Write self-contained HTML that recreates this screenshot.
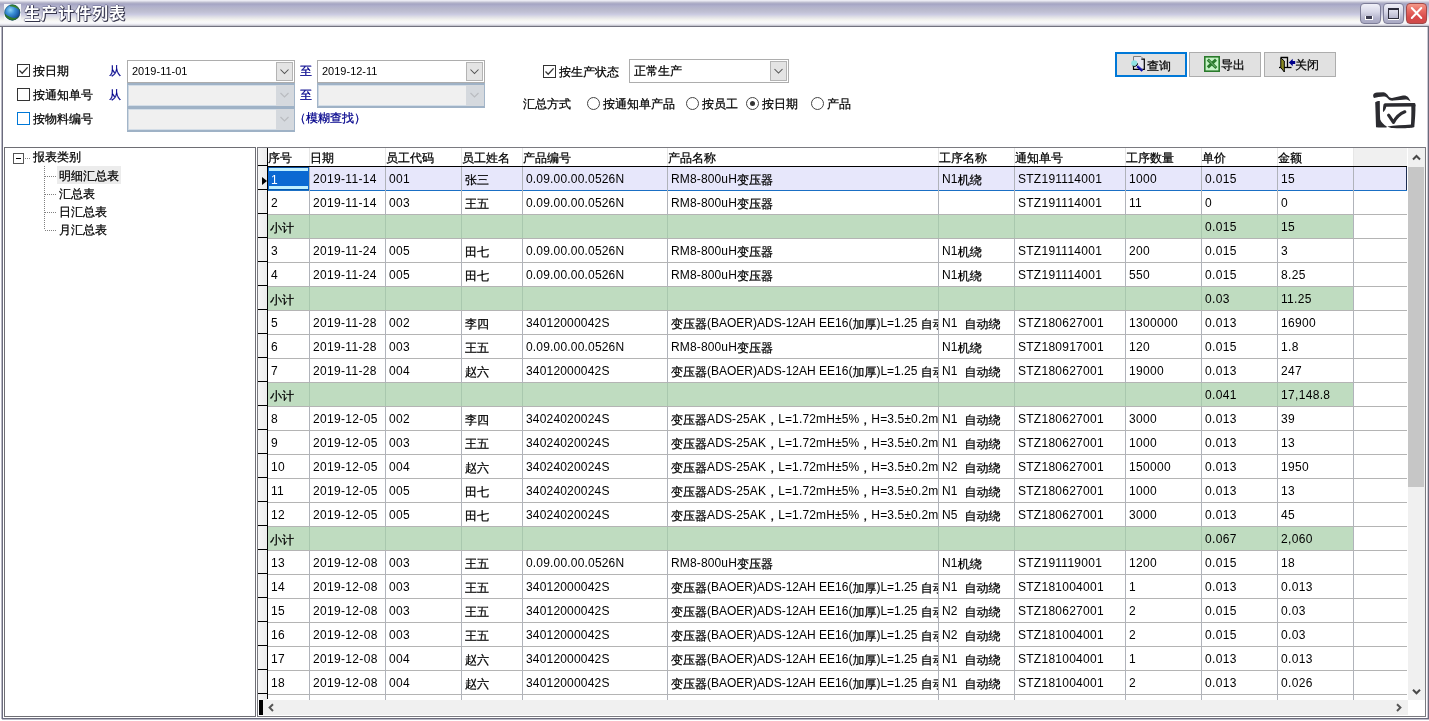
<!DOCTYPE html>
<html lang="zh-CN">
<head>
<meta charset="utf-8">
<title>生产计件列表</title>
<style>
html,body{margin:0;padding:0}
body{width:1429px;height:721px;overflow:hidden;background:#fff;position:relative;font-family:"Liberation Sans","WenQuanYi Zen Hei","Noto Sans CJK SC",sans-serif;font-size:12px;color:#000;will-change:transform}
div,span{box-sizing:border-box}
.a{position:absolute}
.tbar{position:absolute;left:0;top:0;width:1429px;height:26px;background:linear-gradient(to bottom,#f4f4fa 0px,#e2e2ec 1px,#bcbccf 2.5px,#a4a4c2 4px,#afafcb 6px,#b8b8cc 9px,#c0c0d4 12px,#cccce2 14.5px,#e0e0e6 17px,#f4f4f0 20px,#fafafa 22px,#f2f2f7 24px,#c8c8d2 25.5px,#a0a0ac 26px)}
.tline{position:absolute;left:0;top:26px;width:1429px;height:1px;background:#72727f}
.title{position:absolute;left:24px;top:3px;height:22px;line-height:22px;font-family:"Liberation Sans","Noto Sans CJK SC",sans-serif;font-weight:700;font-size:16px;letter-spacing:1px;color:#fff;text-shadow:1px 1px 0 #34344a,1px 0 0 #50506a,0 1px 0 #50506a,0 -1px 0 rgba(110,110,150,.55),-1px 0 0 rgba(110,110,150,.45);white-space:nowrap}
.wb{position:absolute;top:3px;width:21px;height:21px;border-radius:4px;border:1px solid #7d7d98}
.wmin,.wmax{background:linear-gradient(to bottom,#f0f0f8 0%,#d8d8e8 40%,#b4b4cc 75%,#a8a8c2 100%)}
.wcls{background:linear-gradient(to bottom,#f49a8a 0%,#e86a62 35%,#d84a4a 70%,#cf4a4a 100%);border-color:#a04848}
.bl{position:absolute;background:#6b6b7c}
.cb{position:absolute;width:13px;height:13px;border:1px solid #333;background:#fff}
.lbl{position:absolute;height:14px;line-height:14px;white-space:nowrap}
.navy{color:#00008b}
.combo{position:absolute;background:#fff;border:1px solid #adadad}
.combo .tx{position:absolute;left:4px;top:0;height:21px;line-height:21px;font-size:11px;font-family:"Liberation Sans",sans-serif;white-space:nowrap}
.combo .dd{position:absolute;right:1px;top:1px;width:17px;height:19px;background:#e4e4e4;border:1px solid #b4b4b4}
.combo.dis{background:#f0f0f0;border:1px solid #a3b5c8;border-top:2px solid #9fb2c6;border-bottom:2px solid #9fb2c6;box-shadow:inset 1px 0 0 #ccd7e2,inset 0 1px 0 #d3dde7,inset 0 -1px 0 #d3dde7}
.combo.dis .dd{background:#d5d9de;border:0;right:0;top:0;width:18px;height:21px}
.rd{position:absolute;width:13px;height:13px;border:1px solid #444;border-radius:50%;background:#fff}
.rd.on::after{content:"";position:absolute;left:3px;top:3px;width:5px;height:5px;border-radius:50%;background:#333}
.btn{position:absolute;top:52px;width:72px;height:25px;background:#e1e1e1;border:1px solid #adadad}
.btn.def{border:2px solid #0078d7}
.btn .bt{position:absolute;top:5px;height:14px;line-height:14px;white-space:nowrap}
.tree{position:absolute;left:4px;top:147px;width:252px;height:570px;border:1px solid #6e6e74;background:#fff}
.ti{position:absolute;height:18px;line-height:18px;white-space:nowrap}
.dv{position:absolute;width:1px;background-image:linear-gradient(to bottom,#808080 50%,transparent 50%);background-size:1px 2px}
.dh{position:absolute;height:1px;background-image:linear-gradient(to right,#808080 50%,transparent 50%);background-size:2px 1px}
.grid{position:absolute;left:257px;top:147px;width:1169px;height:570px;border:1px solid #7a7a80;background:#fff;overflow:hidden}
.ghead{position:absolute;left:0;top:0;width:1149px;height:18px;background:#fff}
.hc{position:absolute;top:0;height:18px;line-height:19px;padding-top:3px;line-height:14px;white-space:nowrap;overflow:hidden}
.hfill{position:absolute;top:0;height:18px;background:#f0f0f0}
.row{position:absolute;left:10px;width:1139px;height:24px;border-bottom:1px solid #b4b4b4;background:#fff}
.row .c{position:absolute;top:0;height:23px;line-height:23px;padding-top:1px;padding-left:3px;white-space:pre;overflow:hidden}
.c.n{letter-spacing:.33px}
.c.t{letter-spacing:.14px}
.c.n2{letter-spacing:.18px}
.c.n3{letter-spacing:.26px}
.c.t0{letter-spacing:0}
.c .k{position:relative;top:1px;letter-spacing:0}
.row{left:0;width:1149px}
.row.sub{z-index:2}
.row.sub .c{background:#bfdcc0;box-shadow:1px 0 0 #a9c8ae}
.row.sub .c:last-child{box-shadow:1px 0 0 #b0b3ba}
.row.sub .c:first-child{padding-left:2px}
.row.sel{background:#e7e7fb;border-bottom:1px solid #1a6fc4}
.row.sel::after{content:"";position:absolute;right:0;top:0;width:1px;height:23px;background:#1c2c50}
.row.last{height:6px;border-bottom:0}
.c.first{background:#0b69d2;color:#fff;border-top:1px solid #0a4fa0;border-bottom:1px solid #0a58a8}
.c.first::before{content:"";position:absolute;left:1px;right:1px;top:0;height:3px;background:#bfefff}
.c.first::after{content:"";position:absolute;left:1px;right:1px;bottom:0;height:3px;background:#bfefff}
.vl{position:absolute;top:19px;width:1px;height:533px;background:#b0b3ba}
.vlh{position:absolute;top:0;width:1px;height:18px;background:#e6e6e6}
.ind{z-index:3;position:absolute;left:0;top:0;width:9px;height:552px;background:#f0f0f0}
.indc{position:absolute;left:0;width:9px;border-bottom:1px solid #000;background:linear-gradient(to right,#f6f6f6,#ececec)}
.indline{z-index:3;position:absolute;left:9px;top:0;width:1px;height:551px;background:#000}
.hline{position:absolute;left:0;top:18px;width:1149px;height:1px;background:#000}
.tri{z-index:4;position:absolute;left:4px;top:29px;width:0;height:0;border-left:5px solid #000;border-top:4px solid transparent;border-bottom:4px solid transparent}
.vs{position:absolute;left:1150px;top:0;width:17px;height:552px;background:#f0f0f0}
.vth{position:absolute;left:0;top:19px;width:16px;height:320px;background:#c6c6c6}
.hs{position:absolute;left:5px;top:552px;width:1145px;height:15px;background:#f0f0f0}
.mark{position:absolute;left:1px;top:551px;width:4px;height:16px;background:#000}

.lbl,.ti,.hc,.bt,.k,.cj{-webkit-text-stroke:.25px currentColor}
</style>
</head>
<body>
<div class="tbar"></div>
<div class="tline"></div>
<svg class="a" style="left:4px;top:4px" width="17" height="17" viewBox="0 0 17 17">
<defs>
<radialGradient id="gl" cx="0.38" cy="0.34" r="0.7"><stop offset="0" stop-color="#8fd6f6"/><stop offset="0.4" stop-color="#3a8fd6"/><stop offset="0.8" stop-color="#1a5aa6"/><stop offset="1" stop-color="#103c74"/></radialGradient>
<clipPath id="gc"><circle cx="8.3" cy="8.5" r="7.9"/></clipPath>
</defs>
<rect x="0" y="0" width="17" height="17" fill="#f4f6f8"/>
<circle cx="8.3" cy="8.5" r="7.9" fill="url(#gl)"/>
<g clip-path="url(#gc)">
<path d="M6 0.5 C10 -0.5 15 2 16.5 7 C14 4.5 10.5 2.2 6 2.2 Z" fill="#3c8a2e"/>
<path d="M0 9 C1 13 4 16.5 9.5 16.8 C13 16.5 15 14.5 16 12.5 C12 15 6 14.5 0 9 Z" fill="#2f7a2a"/>
</g>
<circle cx="8.3" cy="8.5" r="7.6" fill="none" stroke="#1d4a46" stroke-opacity=".55" stroke-width=".8"/>
</svg>
<div class="title">生产计件列表</div>
<div class="wb wmin" style="left:1360px"><div class="a" style="left:4px;top:12px;width:8px;height:4px;background:#fff"></div><div class="a" style="left:5px;top:12px;width:6px;height:3px;background:#3c3c50"></div></div>
<div class="wb wmax" style="left:1383px"><div class="a" style="left:4px;top:4px;width:11px;height:11px;border:1px solid #2c2c3a;border-top-width:2px;box-shadow:0 1px 0 #fff,1px 0 0 rgba(255,255,255,.6)"></div></div>
<div class="wb wcls" style="left:1406px"><svg class="a" style="left:0;top:0" width="19" height="19" viewBox="0 0 19 19"><path d="M4.8 4 L14.3 14 M14.3 4 L4.8 14" stroke="#fff" stroke-width="2" stroke-linecap="round" fill="none"/></svg></div>

<!-- window frame -->
<div class="bl" style="left:2px;top:27px;width:1px;height:692px"></div>
<div class="bl" style="left:1px;top:27px;width:1px;height:692px;background:#b9b9c6"></div>
<div class="bl" style="left:1428px;top:27px;width:1px;height:692px"></div>
<div class="bl" style="left:1427px;top:27px;width:1px;height:692px;background:#c9c9d4"></div>
<div class="bl" style="left:2px;top:718px;width:1427px;height:1px"></div>
<div class="bl" style="left:2px;top:719px;width:1427px;height:1px;background:#b9b9c6"></div>

<!-- filter area -->
<div class="cb" style="left:17px;top:64px"><svg class="a" style="left:0;top:0" width="11" height="11" viewBox="0 0 11 11"><path d="M1.5 5.5 L4.2 8.2 L9.6 2.4" stroke="#333" stroke-width="1.3" fill="none"/></svg></div>
<div class="lbl" style="left:33px;top:64px">按日期</div>
<div class="cb" style="left:17px;top:88px"></div>
<div class="lbl" style="left:33px;top:88px">按通知单号</div>
<div class="cb" style="left:17px;top:112px;border-color:#0078d7"></div>
<div class="lbl" style="left:33px;top:112px">按物料编号</div>
<div class="lbl navy" style="left:109px;top:64px">从</div>
<div class="lbl navy" style="left:109px;top:88px">从</div>

<div class="combo" style="left:127px;top:60px;width:168px;height:23px"><div class="tx">2019-11-01</div><div class="dd"><svg class="a" style="left:0;top:0" width="15" height="17" viewBox="0 0 15 17"><path d="M3.5 6.5 L7.5 10.5 L11.5 6.5" stroke="#505050" stroke-width="1.05" fill="none"/></svg></div></div>
<div class="combo dis" style="left:127px;top:83px;width:168px;height:25px"><div class="dd"><svg class="a" style="left:1px;top:1px" width="15" height="18" viewBox="0 0 15 18"><path d="M3.5 7 L7.5 11 L11.5 7" stroke="#b9bcc0" stroke-width="1.2" fill="none"/></svg></div></div>
<div class="combo dis" style="left:127px;top:107px;width:168px;height:25px"><div class="dd"><svg class="a" style="left:1px;top:1px" width="15" height="18" viewBox="0 0 15 18"><path d="M3.5 7 L7.5 11 L11.5 7" stroke="#b9bcc0" stroke-width="1.2" fill="none"/></svg></div></div>
<div class="lbl navy" style="left:300px;top:64px">至</div>
<div class="lbl navy" style="left:300px;top:88px">至</div>
<div class="lbl navy" style="left:294px;top:111px">（模糊查找）</div>
<div class="combo" style="left:317px;top:60px;width:168px;height:23px"><div class="tx">2019-12-11</div><div class="dd"><svg class="a" style="left:0;top:0" width="15" height="17" viewBox="0 0 15 17"><path d="M3.5 6.5 L7.5 10.5 L11.5 6.5" stroke="#505050" stroke-width="1.05" fill="none"/></svg></div></div>
<div class="combo dis" style="left:317px;top:83px;width:168px;height:25px"><div class="dd"><svg class="a" style="left:1px;top:1px" width="15" height="18" viewBox="0 0 15 18"><path d="M3.5 7 L7.5 11 L11.5 7" stroke="#b9bcc0" stroke-width="1.2" fill="none"/></svg></div></div>

<div class="cb" style="left:543px;top:65px"><svg class="a" style="left:0;top:0" width="11" height="11" viewBox="0 0 11 11"><path d="M1.5 5.5 L4.2 8.2 L9.6 2.4" stroke="#333" stroke-width="1.3" fill="none"/></svg></div>
<div class="lbl" style="left:559px;top:65px">按生产状态</div>
<div class="combo" style="left:629px;top:59px;width:160px;height:24px"><div class="tx cj" style="font-size:12px;font-family:inherit;height:22px;line-height:22px;left:4px">正常生产</div><div class="dd" style="height:20px"><svg class="a" style="left:0;top:0" width="15" height="18" viewBox="0 0 15 18"><path d="M3.5 7 L7.5 11 L11.5 7" stroke="#505050" stroke-width="1.05" fill="none"/></svg></div></div>
<div class="lbl" style="left:523px;top:97px">汇总方式</div>
<div class="rd" style="left:587px;top:97px"></div><div class="lbl" style="left:603px;top:97px">按通知单产品</div>
<div class="rd" style="left:686px;top:97px"></div><div class="lbl" style="left:702px;top:97px">按员工</div>
<div class="rd on" style="left:746px;top:97px"></div><div class="lbl" style="left:762px;top:97px">按日期</div>
<div class="rd" style="left:811px;top:97px"></div><div class="lbl" style="left:827px;top:97px">产品</div>

<!-- buttons -->
<div class="btn def" style="left:1115px">
<svg class="a" style="left:13px;top:1px" width="18" height="18" viewBox="0 0 18 18"><path d="M3.5 1.5 H11 L14.3 4.5 V14.3 H3.5 Z" fill="#e6e6ee"/><path d="M3.5 6 V1.5 H11 L12.6 3.1" fill="none" stroke="#808080" stroke-width="1"/><path d="M11.3 4.1 H14.3 V14.3 H3.5 V11.4" fill="none" stroke="#000" stroke-width="1.2"/><circle cx="4.3" cy="8.3" r="3.1" fill="#8fe3e3"/><path d="M2.6 11 A3.3 3.3 0 0 0 7.6 8.4" fill="none" stroke="#000" stroke-width="1"/><path d="M7.2 11.2 L12.4 15.8" stroke="#0a0aa0" stroke-width="2.3"/><path d="M7.9 10.7 L12.9 15.1" stroke="#6a6ad8" stroke-width=".6"/></svg>
<div class="bt" style="left:30px">查询</div></div>
<div class="btn" style="left:1189px">
<svg class="a" style="left:14px;top:3px" width="16" height="16" viewBox="0 0 16 16"><rect x="0.8" y="0.8" width="14.4" height="14.4" fill="#c6f3c6" stroke="#2a7a2c" stroke-width="1.6"/><path d="M3.8 3.6 L12.4 12 M12 3.6 L3.8 11.4" stroke="#2a7a2c" stroke-width="2.9" fill="none"/><path d="M4.6 4 L11.6 11.2" stroke="#bfe9bf" stroke-width=".6"/></svg>
<div class="bt" style="left:31px">导出</div></div>
<div class="btn" style="left:1264px">
<svg class="a" style="left:13px;top:3px" width="18" height="18" viewBox="0 0 18 18"><path d="M2.5 1.5 H9.5 V11.5" fill="none" stroke="#000" stroke-width="1.3"/><path d="M1 11.5 H13.5" stroke="#000" stroke-width="1.3"/><path d="M2.8 2 L6.3 5 V16 L2.8 11.5 Z" fill="#8a8a22" stroke="#000" stroke-width="1"/><path d="M10.9 6.5 L14.7 2.8 V5 H17.2 V8 H14.7 V10.2 Z" fill="#00008b"/></svg>
<div class="bt" style="left:30px">关闭</div></div>

<!-- folder icon -->
<svg class="a" style="left:1368px;top:88px" width="52" height="46" viewBox="1368 88 52 46">
<g fill="#2b2b30">
<path d="M1373.2 95 C1373.5 93.5 1375 92.7 1377 92.6 L1383.5 92.3 C1386 92.5 1387.2 94.5 1388.5 96.2 C1389.5 97.5 1390.5 98 1392 97.9 L1403 95.5 C1405 95.2 1407 95.8 1408 97 C1409.2 98.5 1410 100 1410.6 101.6 C1409 100.5 1407.8 99.8 1406.5 99.6 C1404 99.3 1398 100.3 1393.5 100.6 C1391 100.8 1389.5 100.3 1388.3 99 C1387 97.5 1386 96.7 1384.5 96.5 C1381 96.2 1377.5 97.2 1374 98 C1373.3 97.2 1373 96 1373.2 95 Z"/>
<path d="M1375.2 102.2 C1376.5 101.3 1378.3 100.8 1379.8 100.9 C1379.9 107 1379.8 114 1380.2 119.5 C1381.5 122.5 1384 125 1386.8 126.6 L1386.5 127.4 C1383 127.6 1379 127.6 1376 127.3 C1375.8 119 1375.5 110 1375.2 102.2 Z"/>
<path d="M1383.6 104.3 C1384 103.5 1385 103.2 1386 103.2 L1414.5 103 C1415.3 103.2 1415.6 104 1415.5 105 L1415.3 106.5 L1386.3 106.8 C1385.8 108.5 1385.3 110.5 1383.2 112.3 C1382.7 110 1383 107 1383.6 104.3 Z"/>
<path d="M1411.3 106 L1415.4 105 C1415.6 112 1415 120 1414.3 127 L1410.8 127.5 C1411.3 120 1411.5 113 1411.3 106 Z"/>
<path d="M1387.3 126.4 C1394 125.3 1403 125 1411.5 124.4 L1414.3 127 C1412 128.3 1400 128.6 1393 128 C1391 127.8 1388.5 127.2 1387.3 126.4 Z"/>
</g>
<path d="M1388.6 115.2 C1390.3 117.6 1392 120.3 1393.4 122.4 C1396 117.6 1400 113.6 1404.8 111.8" fill="none" stroke="#2b2b30" stroke-width="3.2" stroke-linecap="round" stroke-linejoin="round"/>
</svg>

<!-- tree -->
<div class="tree">
<div class="a" style="left:8px;top:5px;width:11px;height:11px;border:1px solid #555;background:#fff"><div class="a" style="left:2px;top:4px;width:5px;height:1px;background:#000"></div></div>
<div class="dh" style="left:20px;top:10px;width:6px"></div>
<div class="ti" style="left:28px;top:0px">报表类别</div>
<div class="dv" style="left:39px;top:18px;height:64px"></div>
<div class="dh" style="left:40px;top:28px;width:12px"></div>
<div class="dh" style="left:40px;top:46px;width:12px"></div>
<div class="dh" style="left:40px;top:64px;width:12px"></div>
<div class="dh" style="left:40px;top:82px;width:12px"></div>
<div class="a" style="left:52px;top:18px;width:64px;height:18px;background:#ececec"></div>
<div class="ti" style="left:54px;top:19px">明细汇总表</div>
<div class="ti" style="left:54px;top:37px">汇总表</div>
<div class="ti" style="left:54px;top:55px">日汇总表</div>
<div class="ti" style="left:54px;top:73px">月汇总表</div>
</div>
<div class="grid">
<div class="ghead">
<div class="hc" style="left:10px;width:41px">序号</div>
<div class="hc" style="left:52px;width:75px">日期</div>
<div class="hc" style="left:128px;width:75px">员工代码</div>
<div class="hc" style="left:204px;width:60px">员工姓名</div>
<div class="hc" style="left:265px;width:144px">产品编号</div>
<div class="hc" style="left:410px;width:270px">产品名称</div>
<div class="hc" style="left:681px;width:75px">工序名称</div>
<div class="hc" style="left:757px;width:110px">通知单号</div>
<div class="hc" style="left:868px;width:75px">工序数量</div>
<div class="hc" style="left:944px;width:75px">单价</div>
<div class="hc" style="left:1020px;width:75px">金额</div>
<div class="hfill" style="left:1096px;width:53px"></div>
</div>
<div class="row sel" style="top:19px">
<div class="c n first" style="left:10px;width:41px">1</div><div class="c n" style="left:52px;width:75px">2019-11-14</div><div class="c n" style="left:128px;width:75px">001</div><div class="c t" style="left:204px;width:60px"><span class="k">张三</span></div><div class="c n2" style="left:265px;width:144px">0.09.00.00.0526N</div><div class="c t" style="left:410px;width:270px">RM8-800uH<span class="k">变压器</span></div><div class="c t" style="left:681px;width:75px">N1<span class="k">机绕</span></div><div class="c n3" style="left:757px;width:110px">STZ191114001</div><div class="c n" style="left:868px;width:75px">1000</div><div class="c n" style="left:944px;width:75px">0.015</div><div class="c n" style="left:1020px;width:75px">15</div>
</div>
<div class="row" style="top:43px">
<div class="c n" style="left:10px;width:41px">2</div><div class="c n" style="left:52px;width:75px">2019-11-14</div><div class="c n" style="left:128px;width:75px">003</div><div class="c t" style="left:204px;width:60px"><span class="k">王五</span></div><div class="c n2" style="left:265px;width:144px">0.09.00.00.0526N</div><div class="c t" style="left:410px;width:270px">RM8-800uH<span class="k">变压器</span></div><div class="c t" style="left:681px;width:75px"></div><div class="c n3" style="left:757px;width:110px">STZ191114001</div><div class="c n" style="left:868px;width:75px">11</div><div class="c n" style="left:944px;width:75px">0</div><div class="c n" style="left:1020px;width:75px">0</div>
</div>
<div class="row sub" style="top:67px">
<div class="c n" style="left:10px;width:41px"><span class="k">小计</span></div><div class="c n" style="left:52px;width:75px"></div><div class="c n" style="left:128px;width:75px"></div><div class="c t" style="left:204px;width:60px"></div><div class="c n2" style="left:265px;width:144px"></div><div class="c t" style="left:410px;width:270px"></div><div class="c t" style="left:681px;width:75px"></div><div class="c n3" style="left:757px;width:110px"></div><div class="c n" style="left:868px;width:75px"></div><div class="c n" style="left:944px;width:75px">0.015</div><div class="c n" style="left:1020px;width:75px">15</div>
</div>
<div class="row" style="top:91px">
<div class="c n" style="left:10px;width:41px">3</div><div class="c n" style="left:52px;width:75px">2019-11-24</div><div class="c n" style="left:128px;width:75px">005</div><div class="c t" style="left:204px;width:60px"><span class="k">田七</span></div><div class="c n2" style="left:265px;width:144px">0.09.00.00.0526N</div><div class="c t" style="left:410px;width:270px">RM8-800uH<span class="k">变压器</span></div><div class="c t" style="left:681px;width:75px">N1<span class="k">机绕</span></div><div class="c n3" style="left:757px;width:110px">STZ191114001</div><div class="c n" style="left:868px;width:75px">200</div><div class="c n" style="left:944px;width:75px">0.015</div><div class="c n" style="left:1020px;width:75px">3</div>
</div>
<div class="row" style="top:115px">
<div class="c n" style="left:10px;width:41px">4</div><div class="c n" style="left:52px;width:75px">2019-11-24</div><div class="c n" style="left:128px;width:75px">005</div><div class="c t" style="left:204px;width:60px"><span class="k">田七</span></div><div class="c n2" style="left:265px;width:144px">0.09.00.00.0526N</div><div class="c t" style="left:410px;width:270px">RM8-800uH<span class="k">变压器</span></div><div class="c t" style="left:681px;width:75px">N1<span class="k">机绕</span></div><div class="c n3" style="left:757px;width:110px">STZ191114001</div><div class="c n" style="left:868px;width:75px">550</div><div class="c n" style="left:944px;width:75px">0.015</div><div class="c n" style="left:1020px;width:75px">8.25</div>
</div>
<div class="row sub" style="top:139px">
<div class="c n" style="left:10px;width:41px"><span class="k">小计</span></div><div class="c n" style="left:52px;width:75px"></div><div class="c n" style="left:128px;width:75px"></div><div class="c t" style="left:204px;width:60px"></div><div class="c n2" style="left:265px;width:144px"></div><div class="c t" style="left:410px;width:270px"></div><div class="c t" style="left:681px;width:75px"></div><div class="c n3" style="left:757px;width:110px"></div><div class="c n" style="left:868px;width:75px"></div><div class="c n" style="left:944px;width:75px">0.03</div><div class="c n" style="left:1020px;width:75px">11.25</div>
</div>
<div class="row" style="top:163px">
<div class="c n" style="left:10px;width:41px">5</div><div class="c n" style="left:52px;width:75px">2019-11-28</div><div class="c n" style="left:128px;width:75px">002</div><div class="c t" style="left:204px;width:60px"><span class="k">李四</span></div><div class="c n2" style="left:265px;width:144px">34012000042S</div><div class="c t0" style="left:410px;width:270px"><span class="k">变压器</span>(BAOER)ADS-12AH EE16(<span class="k">加厚</span>)L=1.25 <span class="k">自动绕</span></div><div class="c t" style="left:681px;width:75px">N1  <span class="k">自动绕</span></div><div class="c n3" style="left:757px;width:110px">STZ180627001</div><div class="c n" style="left:868px;width:75px">1300000</div><div class="c n" style="left:944px;width:75px">0.013</div><div class="c n" style="left:1020px;width:75px">16900</div>
</div>
<div class="row" style="top:187px">
<div class="c n" style="left:10px;width:41px">6</div><div class="c n" style="left:52px;width:75px">2019-11-28</div><div class="c n" style="left:128px;width:75px">003</div><div class="c t" style="left:204px;width:60px"><span class="k">王五</span></div><div class="c n2" style="left:265px;width:144px">0.09.00.00.0526N</div><div class="c t" style="left:410px;width:270px">RM8-800uH<span class="k">变压器</span></div><div class="c t" style="left:681px;width:75px">N1<span class="k">机绕</span></div><div class="c n3" style="left:757px;width:110px">STZ180917001</div><div class="c n" style="left:868px;width:75px">120</div><div class="c n" style="left:944px;width:75px">0.015</div><div class="c n" style="left:1020px;width:75px">1.8</div>
</div>
<div class="row" style="top:211px">
<div class="c n" style="left:10px;width:41px">7</div><div class="c n" style="left:52px;width:75px">2019-11-28</div><div class="c n" style="left:128px;width:75px">004</div><div class="c t" style="left:204px;width:60px"><span class="k">赵六</span></div><div class="c n2" style="left:265px;width:144px">34012000042S</div><div class="c t0" style="left:410px;width:270px"><span class="k">变压器</span>(BAOER)ADS-12AH EE16(<span class="k">加厚</span>)L=1.25 <span class="k">自动绕</span></div><div class="c t" style="left:681px;width:75px">N1  <span class="k">自动绕</span></div><div class="c n3" style="left:757px;width:110px">STZ180627001</div><div class="c n" style="left:868px;width:75px">19000</div><div class="c n" style="left:944px;width:75px">0.013</div><div class="c n" style="left:1020px;width:75px">247</div>
</div>
<div class="row sub" style="top:235px">
<div class="c n" style="left:10px;width:41px"><span class="k">小计</span></div><div class="c n" style="left:52px;width:75px"></div><div class="c n" style="left:128px;width:75px"></div><div class="c t" style="left:204px;width:60px"></div><div class="c n2" style="left:265px;width:144px"></div><div class="c t" style="left:410px;width:270px"></div><div class="c t" style="left:681px;width:75px"></div><div class="c n3" style="left:757px;width:110px"></div><div class="c n" style="left:868px;width:75px"></div><div class="c n" style="left:944px;width:75px">0.041</div><div class="c n" style="left:1020px;width:75px">17,148.8</div>
</div>
<div class="row" style="top:259px">
<div class="c n" style="left:10px;width:41px">8</div><div class="c n" style="left:52px;width:75px">2019-12-05</div><div class="c n" style="left:128px;width:75px">002</div><div class="c t" style="left:204px;width:60px"><span class="k">李四</span></div><div class="c n2" style="left:265px;width:144px">34024020024S</div><div class="c t" style="left:410px;width:270px"><span class="k">变压器</span>ADS-25AK<span class="k">，</span>L=1.72mH±5%<span class="k">，</span>H=3.5±0.2mm</div><div class="c t" style="left:681px;width:75px">N1  <span class="k">自动绕</span></div><div class="c n3" style="left:757px;width:110px">STZ180627001</div><div class="c n" style="left:868px;width:75px">3000</div><div class="c n" style="left:944px;width:75px">0.013</div><div class="c n" style="left:1020px;width:75px">39</div>
</div>
<div class="row" style="top:283px">
<div class="c n" style="left:10px;width:41px">9</div><div class="c n" style="left:52px;width:75px">2019-12-05</div><div class="c n" style="left:128px;width:75px">003</div><div class="c t" style="left:204px;width:60px"><span class="k">王五</span></div><div class="c n2" style="left:265px;width:144px">34024020024S</div><div class="c t" style="left:410px;width:270px"><span class="k">变压器</span>ADS-25AK<span class="k">，</span>L=1.72mH±5%<span class="k">，</span>H=3.5±0.2mm</div><div class="c t" style="left:681px;width:75px">N1  <span class="k">自动绕</span></div><div class="c n3" style="left:757px;width:110px">STZ180627001</div><div class="c n" style="left:868px;width:75px">1000</div><div class="c n" style="left:944px;width:75px">0.013</div><div class="c n" style="left:1020px;width:75px">13</div>
</div>
<div class="row" style="top:307px">
<div class="c n" style="left:10px;width:41px">10</div><div class="c n" style="left:52px;width:75px">2019-12-05</div><div class="c n" style="left:128px;width:75px">004</div><div class="c t" style="left:204px;width:60px"><span class="k">赵六</span></div><div class="c n2" style="left:265px;width:144px">34024020024S</div><div class="c t" style="left:410px;width:270px"><span class="k">变压器</span>ADS-25AK<span class="k">，</span>L=1.72mH±5%<span class="k">，</span>H=3.5±0.2mm</div><div class="c t" style="left:681px;width:75px">N2  <span class="k">自动绕</span></div><div class="c n3" style="left:757px;width:110px">STZ180627001</div><div class="c n" style="left:868px;width:75px">150000</div><div class="c n" style="left:944px;width:75px">0.013</div><div class="c n" style="left:1020px;width:75px">1950</div>
</div>
<div class="row" style="top:331px">
<div class="c n" style="left:10px;width:41px">11</div><div class="c n" style="left:52px;width:75px">2019-12-05</div><div class="c n" style="left:128px;width:75px">005</div><div class="c t" style="left:204px;width:60px"><span class="k">田七</span></div><div class="c n2" style="left:265px;width:144px">34024020024S</div><div class="c t" style="left:410px;width:270px"><span class="k">变压器</span>ADS-25AK<span class="k">，</span>L=1.72mH±5%<span class="k">，</span>H=3.5±0.2mm</div><div class="c t" style="left:681px;width:75px">N1  <span class="k">自动绕</span></div><div class="c n3" style="left:757px;width:110px">STZ180627001</div><div class="c n" style="left:868px;width:75px">1000</div><div class="c n" style="left:944px;width:75px">0.013</div><div class="c n" style="left:1020px;width:75px">13</div>
</div>
<div class="row" style="top:355px">
<div class="c n" style="left:10px;width:41px">12</div><div class="c n" style="left:52px;width:75px">2019-12-05</div><div class="c n" style="left:128px;width:75px">005</div><div class="c t" style="left:204px;width:60px"><span class="k">田七</span></div><div class="c n2" style="left:265px;width:144px">34024020024S</div><div class="c t" style="left:410px;width:270px"><span class="k">变压器</span>ADS-25AK<span class="k">，</span>L=1.72mH±5%<span class="k">，</span>H=3.5±0.2mm</div><div class="c t" style="left:681px;width:75px">N5  <span class="k">自动绕</span></div><div class="c n3" style="left:757px;width:110px">STZ180627001</div><div class="c n" style="left:868px;width:75px">3000</div><div class="c n" style="left:944px;width:75px">0.013</div><div class="c n" style="left:1020px;width:75px">45</div>
</div>
<div class="row sub" style="top:379px">
<div class="c n" style="left:10px;width:41px"><span class="k">小计</span></div><div class="c n" style="left:52px;width:75px"></div><div class="c n" style="left:128px;width:75px"></div><div class="c t" style="left:204px;width:60px"></div><div class="c n2" style="left:265px;width:144px"></div><div class="c t" style="left:410px;width:270px"></div><div class="c t" style="left:681px;width:75px"></div><div class="c n3" style="left:757px;width:110px"></div><div class="c n" style="left:868px;width:75px"></div><div class="c n" style="left:944px;width:75px">0.067</div><div class="c n" style="left:1020px;width:75px">2,060</div>
</div>
<div class="row" style="top:403px">
<div class="c n" style="left:10px;width:41px">13</div><div class="c n" style="left:52px;width:75px">2019-12-08</div><div class="c n" style="left:128px;width:75px">003</div><div class="c t" style="left:204px;width:60px"><span class="k">王五</span></div><div class="c n2" style="left:265px;width:144px">0.09.00.00.0526N</div><div class="c t" style="left:410px;width:270px">RM8-800uH<span class="k">变压器</span></div><div class="c t" style="left:681px;width:75px">N1<span class="k">机绕</span></div><div class="c n3" style="left:757px;width:110px">STZ191119001</div><div class="c n" style="left:868px;width:75px">1200</div><div class="c n" style="left:944px;width:75px">0.015</div><div class="c n" style="left:1020px;width:75px">18</div>
</div>
<div class="row" style="top:427px">
<div class="c n" style="left:10px;width:41px">14</div><div class="c n" style="left:52px;width:75px">2019-12-08</div><div class="c n" style="left:128px;width:75px">003</div><div class="c t" style="left:204px;width:60px"><span class="k">王五</span></div><div class="c n2" style="left:265px;width:144px">34012000042S</div><div class="c t0" style="left:410px;width:270px"><span class="k">变压器</span>(BAOER)ADS-12AH EE16(<span class="k">加厚</span>)L=1.25 <span class="k">自动绕</span></div><div class="c t" style="left:681px;width:75px">N1  <span class="k">自动绕</span></div><div class="c n3" style="left:757px;width:110px">STZ181004001</div><div class="c n" style="left:868px;width:75px">1</div><div class="c n" style="left:944px;width:75px">0.013</div><div class="c n" style="left:1020px;width:75px">0.013</div>
</div>
<div class="row" style="top:451px">
<div class="c n" style="left:10px;width:41px">15</div><div class="c n" style="left:52px;width:75px">2019-12-08</div><div class="c n" style="left:128px;width:75px">003</div><div class="c t" style="left:204px;width:60px"><span class="k">王五</span></div><div class="c n2" style="left:265px;width:144px">34012000042S</div><div class="c t0" style="left:410px;width:270px"><span class="k">变压器</span>(BAOER)ADS-12AH EE16(<span class="k">加厚</span>)L=1.25 <span class="k">自动绕</span></div><div class="c t" style="left:681px;width:75px">N2  <span class="k">自动绕</span></div><div class="c n3" style="left:757px;width:110px">STZ180627001</div><div class="c n" style="left:868px;width:75px">2</div><div class="c n" style="left:944px;width:75px">0.015</div><div class="c n" style="left:1020px;width:75px">0.03</div>
</div>
<div class="row" style="top:475px">
<div class="c n" style="left:10px;width:41px">16</div><div class="c n" style="left:52px;width:75px">2019-12-08</div><div class="c n" style="left:128px;width:75px">003</div><div class="c t" style="left:204px;width:60px"><span class="k">王五</span></div><div class="c n2" style="left:265px;width:144px">34012000042S</div><div class="c t0" style="left:410px;width:270px"><span class="k">变压器</span>(BAOER)ADS-12AH EE16(<span class="k">加厚</span>)L=1.25 <span class="k">自动绕</span></div><div class="c t" style="left:681px;width:75px">N2  <span class="k">自动绕</span></div><div class="c n3" style="left:757px;width:110px">STZ181004001</div><div class="c n" style="left:868px;width:75px">2</div><div class="c n" style="left:944px;width:75px">0.015</div><div class="c n" style="left:1020px;width:75px">0.03</div>
</div>
<div class="row" style="top:499px">
<div class="c n" style="left:10px;width:41px">17</div><div class="c n" style="left:52px;width:75px">2019-12-08</div><div class="c n" style="left:128px;width:75px">004</div><div class="c t" style="left:204px;width:60px"><span class="k">赵六</span></div><div class="c n2" style="left:265px;width:144px">34012000042S</div><div class="c t0" style="left:410px;width:270px"><span class="k">变压器</span>(BAOER)ADS-12AH EE16(<span class="k">加厚</span>)L=1.25 <span class="k">自动绕</span></div><div class="c t" style="left:681px;width:75px">N1  <span class="k">自动绕</span></div><div class="c n3" style="left:757px;width:110px">STZ181004001</div><div class="c n" style="left:868px;width:75px">1</div><div class="c n" style="left:944px;width:75px">0.013</div><div class="c n" style="left:1020px;width:75px">0.013</div>
</div>
<div class="row" style="top:523px">
<div class="c n" style="left:10px;width:41px">18</div><div class="c n" style="left:52px;width:75px">2019-12-08</div><div class="c n" style="left:128px;width:75px">004</div><div class="c t" style="left:204px;width:60px"><span class="k">赵六</span></div><div class="c n2" style="left:265px;width:144px">34012000042S</div><div class="c t0" style="left:410px;width:270px"><span class="k">变压器</span>(BAOER)ADS-12AH EE16(<span class="k">加厚</span>)L=1.25 <span class="k">自动绕</span></div><div class="c t" style="left:681px;width:75px">N1  <span class="k">自动绕</span></div><div class="c n3" style="left:757px;width:110px">STZ181004001</div><div class="c n" style="left:868px;width:75px">2</div><div class="c n" style="left:944px;width:75px">0.013</div><div class="c n" style="left:1020px;width:75px">0.026</div>
</div>
<div class="row last" style="top:547px"></div>
<div class="vl" style="left:51px"></div><div class="vlh" style="left:51px"></div><div class="vl" style="left:127px"></div><div class="vlh" style="left:127px"></div><div class="vl" style="left:203px"></div><div class="vlh" style="left:203px"></div><div class="vl" style="left:264px"></div><div class="vlh" style="left:264px"></div><div class="vl" style="left:409px"></div><div class="vlh" style="left:409px"></div><div class="vl" style="left:680px"></div><div class="vlh" style="left:680px"></div><div class="vl" style="left:756px"></div><div class="vlh" style="left:756px"></div><div class="vl" style="left:867px"></div><div class="vlh" style="left:867px"></div><div class="vl" style="left:943px"></div><div class="vlh" style="left:943px"></div><div class="vl" style="left:1019px"></div><div class="vlh" style="left:1019px"></div><div class="vl" style="left:1095px"></div><div class="vlh" style="left:1095px"></div>
<div class="ind"><div class="indc" style="top:0;height:18px"></div><div class="indc" style="top:19px;height:23px"></div><div class="indc" style="top:43px;height:23px"></div><div class="indc" style="top:67px;height:23px"></div><div class="indc" style="top:91px;height:23px"></div><div class="indc" style="top:115px;height:23px"></div><div class="indc" style="top:139px;height:23px"></div><div class="indc" style="top:163px;height:23px"></div><div class="indc" style="top:187px;height:23px"></div><div class="indc" style="top:211px;height:23px"></div><div class="indc" style="top:235px;height:23px"></div><div class="indc" style="top:259px;height:23px"></div><div class="indc" style="top:283px;height:23px"></div><div class="indc" style="top:307px;height:23px"></div><div class="indc" style="top:331px;height:23px"></div><div class="indc" style="top:355px;height:23px"></div><div class="indc" style="top:379px;height:23px"></div><div class="indc" style="top:403px;height:23px"></div><div class="indc" style="top:427px;height:23px"></div><div class="indc" style="top:451px;height:23px"></div><div class="indc" style="top:475px;height:23px"></div><div class="indc" style="top:499px;height:23px"></div><div class="indc" style="top:523px;height:23px"></div><div class="indc" style="top:547px;height:5px;border-bottom:0"></div></div>
<div class="indline"></div><div class="hline"></div>
<div class="tri"></div>
<div class="vs"><svg class="a" style="left:0;top:0" width="17" height="18" viewBox="0 0 17 18"><path d="M5 11.5 L8.5 8 L12 11.5" stroke="#484848" stroke-width="2" fill="none"/></svg><div class="vth"></div><svg class="a" style="left:0;top:535px" width="17" height="17" viewBox="0 0 17 17"><path d="M5 6.8 L8.5 10.3 L12 6.8" stroke="#484848" stroke-width="2" fill="none"/></svg></div>
<div class="hs"><svg class="a" style="left:2px;top:0" width="12" height="15" viewBox="0 0 12 15"><path d="M8 4.2 L4.6 7.6 L8 11" stroke="#555" stroke-width="2" fill="none"/></svg><svg class="a" style="left:1130px;top:0" width="12" height="15" viewBox="0 0 12 15"><path d="M4 4.2 L7.4 7.6 L4 11" stroke="#555" stroke-width="2" fill="none"/></svg></div>
<div class="a" style="left:1150px;top:552px;width:17px;height:16px;background:#fff"></div>
<div class="mark"></div>
</div>
</body>
</html>
